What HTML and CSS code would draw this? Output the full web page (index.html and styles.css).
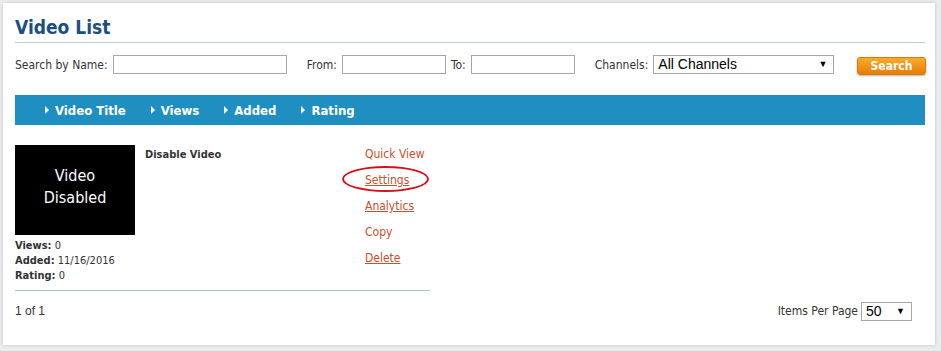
FILE: index.html
```html
<!DOCTYPE html>
<html>
<head>
<meta charset="utf-8">
<title>Video List</title>
<link rel="stylesheet" href="styles.css">
</head>
<body>
<div class="panel">
  <h1 class="title">Video List</h1>
  <div class="search">
    <label class="lbl">Search by Name:</label>
    <input class="txt txt-name" type="text">
    <label class="lbl gap">From:</label>
    <input class="txt txt-date" type="text">
    <label class="lbl gap-s">To:</label>
    <input class="txt txt-date" type="text">
    <label class="lbl gap">Channels:</label>
    <span class="sel sel-ch"><span class="sel-val">All Channels</span><span class="arrow">▼</span></span>
    <button class="btn">Search</button>
  </div>
  <div class="bar">
    <span class="sort">Video Title</span>
    <span class="sort">Views</span>
    <span class="sort">Added</span>
    <span class="sort">Rating</span>
  </div>
  <div class="list">
    <div class="item">
      <div class="left">
        <div class="thumb">Video<br>Disabled</div>
        <div class="meta"><b>Views:</b> 0</div>
        <div class="meta"><b>Added:</b> 11/16/2016</div>
        <div class="meta"><b>Rating:</b> 0</div>
      </div>
      <div class="name">Disable Video</div>
      <div class="links">
        <a class="lnk">Quick View</a>
        <a class="lnk u circled">Settings<span class="ring"></span></a>
        <a class="lnk u">Analytics</a>
        <a class="lnk">Copy</a>
        <a class="lnk u">Delete</a>
      </div>
    </div>
  </div>
  <div class="pager">
    <span class="count">1 of 1</span>
    <span class="ipp">Items Per Page</span>
    <span class="sel sel-pp"><span class="sel-val">50</span><span class="arrow">▼</span></span>
  </div>
</div>
</body>
</html>
```

FILE: styles.css
```css
html, body { margin: 0; padding: 0; }
body {
  background: #e9ebed;
  font-family: "DejaVu Sans Condensed", "DejaVu Sans", sans-serif;
  font-size: 12px;
  color: #333;
  height: 351px;
  overflow: hidden;
}
.panel {
  margin: 3px 6px 0 3px;
  height: 342px;
  background: #fff;
  padding: 0 10px 0 12px;
  box-shadow: 0 0 3px rgba(0,0,0,0.18);
}
.title {
  margin: 0;
  padding: 12px 0 3px 0;
  font-size: 19px;
  line-height: 24px;
  font-weight: bold;
  color: #1b4f83;
  border-bottom: 1px solid #b9cbd7;
}
.search {
  display: flex;
  align-items: center;
  margin-top: 12px;
  height: 19px;
}
.lbl { color: #333; white-space: nowrap; }
.gap { margin-left: 20px; }
.gap-s { margin-left: 5px; }
.txt {
  box-sizing: border-box;
  height: 19px;
  border: 1px solid #a6a6a6;
  margin: 0 0 0 5px;
  padding: 0 2px;
  background: #fff;
}
.txt-name { width: 174px; }
.txt-date { width: 104px; }
.sel {
  position: relative;
  box-sizing: border-box;
  display: inline-block;
  height: 19px;
  border: 1px solid #a6a6a6;
  background: #fff;
  margin-left: 5px;
  font-family: "Liberation Sans", Arial, sans-serif;
  font-size: 14px;
  line-height: 17px;
  color: #000;
  padding-left: 4px;
}
.sel-ch { width: 181px; }
.sel-pp { width: 51px; }
.arrow {
  position: absolute;
  right: 6px;
  top: 0;
  font-size: 9px;
  line-height: 17px;
}
.btn {
  margin-left: auto;
  margin-right: -1px;
  width: 69px;
  height: 18px;
  margin-top: 3px;
  border: 1px solid #d8790a;
  border-radius: 3px;
  background: linear-gradient(#f8ac2c, #e67d05);
  color: #fff;
  font-family: "DejaVu Sans Condensed", "DejaVu Sans", sans-serif;
  font-weight: bold;
  font-size: 12px;
  line-height: 14px;
  padding: 0;
  box-shadow: 0 1px 2px rgba(0,0,0,0.3);
}
.bar {
  margin-top: 21px;
  height: 30px;
  background: #1f8fc1;
  display: flex;
  align-items: center;
  padding-left: 30px;
  gap: 25px;
}
.sort {
  color: #fff;
  font-weight: bold;
  font-size: 13px;
  display: flex;
  align-items: center;
}
.sort::before {
  content: "";
  width: 0;
  height: 0;
  border-left: 4px solid #fff;
  border-top: 4px solid transparent;
  border-bottom: 4px solid transparent;
  margin-right: 6px;
}
.list {
  width: 415px;
  margin-top: 20px;
  border-bottom: 1px solid #a9c0cf;
  padding-bottom: 7px;
}
.item { display: flex; }
.left { width: 120px; }
.thumb {
  box-sizing: border-box;
  width: 120px;
  height: 90px;
  padding-bottom: 6px;
  background: #000;
  color: #fff;
  font-size: 16px;
  line-height: 22px;
  display: flex;
  align-items: center;
  justify-content: center;
  text-align: center;
  margin-bottom: 3px;
}
.meta { line-height: 15px; font-size: 11px; }
.meta b { font-weight: bold; }
.name {
  width: 220px;
  margin-left: 10px;
  font-weight: bold;
  font-size: 11px;
  line-height: 14px;
  padding-top: 3px;
}
.links {
  display: flex;
  flex-direction: column;
  margin-top: -4px;
}
.lnk {
  color: #c8502a;
  font-size: 12px;
  line-height: 26px;
  height: 26px;
  cursor: pointer;
}
.u { text-decoration: underline; }
.circled { position: relative; }
.ring {
  position: absolute;
  left: -23px;
  top: -1px;
  width: 83px;
  height: 22px;
  border: 2.5px solid #d4101c;
  border-radius: 50%;
}
.pager {
  display: flex;
  align-items: center;
  margin-top: 10px;
  height: 20px;
}
.count { font-family: "Liberation Sans", Arial, sans-serif; font-size: 12px; color: #333; }
.ipp { margin-left: auto; color: #333; margin-right: -2px; }
.sel-pp { margin-right: 13px; }
```
